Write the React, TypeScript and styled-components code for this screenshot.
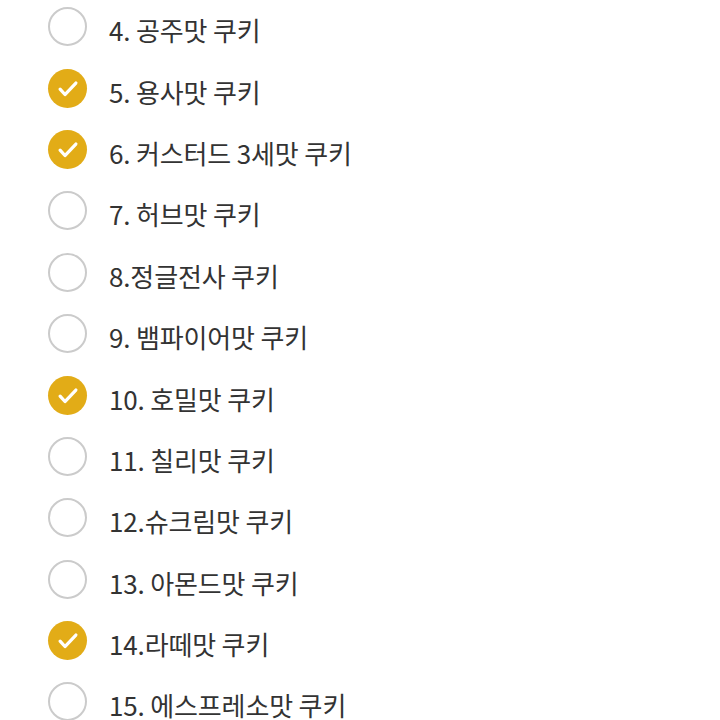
import React from 'react';
import styled, {createGlobalStyle} from 'styled-components';

const GlobalStyle = createGlobalStyle`
  html, body {
    margin: 0;
    padding: 0;
    background: #ffffff;
  }
  body {
    font-family: 'Noto Sans CJK KR', 'Noto Sans', sans-serif;
    overflow: hidden;
  }
`;

type Cookie = {
    label: string,
    checked: boolean
};

const cookies: Cookie[] = [
    {label: '4. 공주맛 쿠키', checked: false},
    {label: '5. 용사맛 쿠키', checked: true},
    {label: '6. 커스터드 3세맛 쿠키', checked: true},
    {label: '7. 허브맛 쿠키', checked: false},
    {label: '8.정글전사 쿠키', checked: false},
    {label: '9. 뱀파이어맛 쿠키', checked: false},
    {label: '10. 호밀맛 쿠키', checked: true},
    {label: '11. 칠리맛 쿠키', checked: false},
    {label: '12.슈크림맛 쿠키', checked: false},
    {label: '13. 아몬드맛 쿠키', checked: false},
    {label: '14.라떼맛 쿠키', checked: true},
    {label: '15. 에스프레소맛 쿠키', checked: false},
];

const List = styled.ul`
  list-style: none;
  margin: -4px 0 0;
  padding: 0 0 0 48px;
`;

const Row = styled.li`
  height: 61.4px;
  display: flex;
  align-items: center;
  gap: 22px;
`;

const Circle = styled.span<{checked:boolean}>`
  flex: none;
  width: 39px;
  height: 39px;
  box-sizing: border-box;
  border-radius: 50%;
  display: flex;
  align-items: center;
  justify-content: center;
  background: ${props => props.checked ? '#e2ac17' : '#ffffff'};
  border: ${props => props.checked ? 'none' : '2.5px solid #cbcbcb'};
`;

const Label = styled.span`
  font-size: 26px;
  color: #333333;
  letter-spacing: -0.15px;
  line-height: 1;
  padding-top: 7px;
`;

const Check = () => (
    <svg width="39" height="39" viewBox="0 0 40 40">
        <path d="M12.4 20.6 L17.4 26.2 L28.6 14.4" fill="none" stroke="#ffffff"
              strokeWidth="3.3" strokeLinecap="round" strokeLinejoin="round"/>
    </svg>
);

export default function App() {
    return (
        <>
            <GlobalStyle/>
            <List>
                {cookies.map(c => (
                    <Row key={c.label}>
                        <Circle checked={c.checked}>{c.checked && <Check/>}</Circle>
                        <Label>{c.label}</Label>
                    </Row>
                ))}
            </List>
        </>
    );
}
